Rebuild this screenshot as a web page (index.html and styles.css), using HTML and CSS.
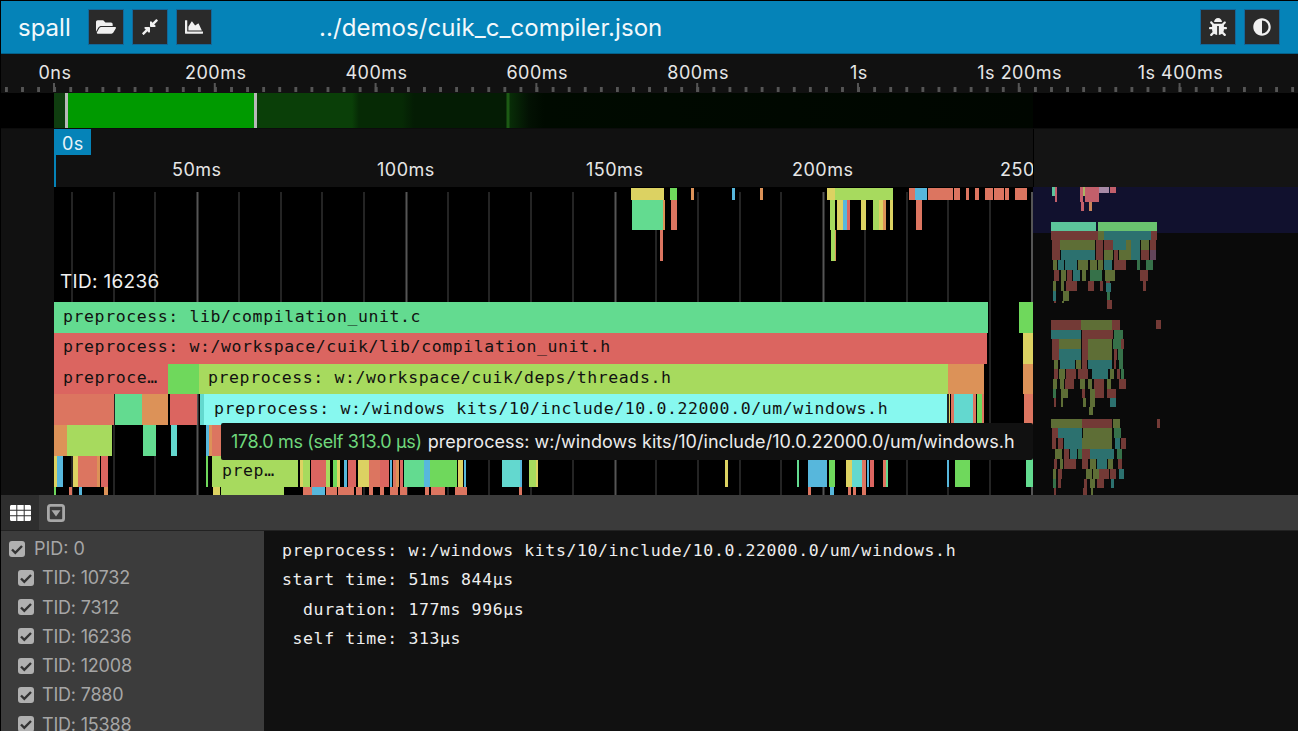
FILE: index.html
```html
<!DOCTYPE html>
<html>
<head>
    <title>spall</title>
    <link rel="stylesheet" href="styles.css">
</head>
<body>
    <div class="header">
        <span class="logo">spall</span>
        <button class="iconBtn"><svg viewBox="0 0 576 512"><path d="M572.694 292.093L500.27 416.248A63.997 63.997 0 0 1 444.989 448H45.025c-18.523 0-30.064-20.093-20.731-36.093l72.424-124.155A64 64 0 0 1 152 256h399.964c18.523 0 30.064 20.093 20.73 36.093zM152 224h328v-48c0-26.51-21.49-48-48-48H272l-64-64H48C21.49 64 0 85.49 0 112v278.046l69.077-118.418C86.214 242.25 117.989 224 152 224z"/></svg></button>
        <button class="iconBtn"><svg viewBox="0 0 448 512"><path d="M4.686 427.314L104 328l-32.922-31.029C55.958 281.851 66.666 256 88.048 256h112C213.303 256 224 266.745 224 280v112c0 21.382-25.803 32.09-40.922 16.971L152 376l-99.314 99.314c-6.248 6.248-16.379 6.248-22.627 0L4.686 449.941c-6.248-6.248-6.248-16.379 0-22.627zM443.314 84.686L344 184l32.922 31.029c15.12 15.12 4.412 40.971-16.97 40.971h-112C234.697 256 224 245.255 224 232V120c0-21.382 25.803-32.09 40.922-16.971L296 136l99.314-99.314c6.248-6.248 16.379-6.248 22.627 0l25.373 25.373c6.248 6.248 6.248 16.379 0 22.627z"/></svg></button>
        <button class="iconBtn"><svg viewBox="0 0 512 512"><path d="M500 384c6.6 0 12 5.4 12 12v40c0 6.6-5.4 12-12 12H12c-6.6 0-12-5.4-12-12V76c0-6.6 5.4-12 12-12h40c6.6 0 12 5.4 12 12v308h436zM372.7 159.5L288 216l-85.3-113.7c-5.1-6.8-15.5-6.3-19.9 1L96 248v104h384l-89.9-187.8c-3.2-6.5-11.4-8.7-17.4-4.7z"/></svg></button>
        <span class="fileName">../demos/cuik_c_compiler.json</span>
        <button class="iconBtn pushRight"><svg viewBox="0 0 512 512"><path d="M511.988 288.9c-.478 17.43-15.217 31.1-32.653 31.1H424v16c0 21.864-4.882 42.584-13.6 61.145l60.228 60.228c12.496 12.497 12.496 32.758 0 45.255-12.498 12.497-32.759 12.496-45.256 0l-54.736-54.736C345.886 467.965 314.351 480 280 480V236c0-6.627-5.373-12-12-12h-24c-6.627 0-12 5.373-12 12v244c-34.351 0-65.886-12.035-90.636-32.108l-54.736 54.736c-12.498 12.497-32.759 12.496-45.256 0-12.496-12.497-12.496-32.758 0-45.255l60.228-60.228C92.882 378.584 88 357.864 88 336v-16H32.666C15.23 320 .491 306.33.013 288.9-.484 270.816 14.028 256 32 256h56v-58.745l-46.628-46.628c-12.496-12.497-12.496-32.758 0-45.255 12.498-12.497 32.758-12.497 45.256 0L141.255 160h229.489l54.627-54.627c12.498-12.497 32.758-12.497 45.256 0 12.496 12.497 12.496 32.758 0 45.255L424 197.255V256h56c17.972 0 32.484 14.816 31.988 32.9zM257 0c-61.856 0-112 50.144-112 112h224C369 50.144 318.856 0 257 0z"/></svg></button>
        <button class="iconBtn"><svg viewBox="0 0 512 512"><path d="M8 256c0 136.966 111.033 248 248 248s248-111.034 248-248S392.966 8 256 8 8 119.033 8 256zm248 184V72c101.705 0 184 82.311 184 184 0 101.705-82.311 184-184 184z"/></svg></button>
    </div>

    <div class="overview">
        <div class="overviewLabels">
            <span class="ovLabel">0ns</span>
            <span class="ovLabel">200ms</span>
            <span class="ovLabel">400ms</span>
            <span class="ovLabel">600ms</span>
            <span class="ovLabel">800ms</span>
            <span class="ovLabel">1s</span>
            <span class="ovLabel">1s 200ms</span>
            <span class="ovLabel">1s 400ms</span>
        </div>
        <div class="overviewTicks"></div>
    </div>

    <div class="minimapBar">
        <div class="heat">
            <span class="handle handleLeft"></span>
            <span class="handle handleRight"></span>
        </div>
    </div>

    <div class="ruler">
        <div class="rulerMain">
            <span class="cursorFlag">0s</span>
            <span class="rulerLabel rl50">50ms</span>
            <span class="rulerLabel rl100">100ms</span>
            <span class="rulerLabel rl150">150ms</span>
            <span class="rulerLabel rl200">200ms</span>
            <span class="rulerLabel rl250">250</span>
        </div>
        <div class="rulerSide"></div>
    </div>

    <div class="flameArea">
        <svg class="flameSvg" width="1298" height="308" viewBox="0 187 1298 308">
            <rect class="gutter" x="0" y="187" width="54" height="308"/>
            <rect class="sideBg" x="1033" y="187" width="265" height="308"/>
            <rect class="sideView" x="1033" y="187" width="265" height="46"/>
            <path class="gridMinor" d="M72 192V495M114 192V495M155 192V495M239 192V495M281 192V495M322 192V495M364 192V495M448 192V495M489 192V495M531 192V495M573 192V495M656 192V495M698 192V495M740 192V495M781 192V495M865 192V495M907 192V495M948 192V495M990 192V495"/>
            <path class="gridMajor" d="M197.5 192V495M406.5 192V495M615.5 192V495M823.5 192V495M1032 192V495"/>

            <!-- upper thread -->
            <g>
                <rect class="ye" x="631" y="188" width="33" height="12"/><rect class="br" x="670" y="188" width="7" height="12"/><rect class="or" x="691" y="188" width="3" height="12"/><rect class="bl" x="732" y="188" width="3" height="12"/><rect class="or" x="760" y="188" width="3" height="12"/><rect class="ye" x="827" y="188" width="8" height="12"/><rect class="li" x="835" y="188" width="58" height="12"/><rect class="sa" x="909" y="188" width="6" height="12"/><rect class="bl" x="915" y="188" width="12" height="12"/><rect class="sa" x="928" y="188" width="25" height="12"/><rect class="sa" x="954" y="188" width="6" height="12"/><rect class="sa" x="966" y="188" width="3" height="12"/><rect class="sa" x="975" y="188" width="4" height="12"/><rect class="sa" x="985" y="188" width="8" height="12"/><rect class="sa" x="994" y="188" width="10" height="12"/><rect class="sa" x="1005" y="188" width="4" height="12"/><rect class="sa" x="1015" y="188" width="12" height="12"/>
                <rect class="gr" x="632" y="200" width="31" height="30"/><rect class="or" x="663" y="200" width="2" height="30"/><rect class="sa" x="671" y="200" width="6" height="30"/><rect class="li" x="830" y="200" width="5" height="30"/><rect class="ye" x="837" y="200" width="6" height="30"/><rect class="bl" x="843" y="200" width="4" height="30"/><rect class="re" x="847" y="200" width="3" height="30"/><rect class="ye" x="861" y="200" width="5" height="30"/><rect class="li" x="873" y="200" width="6" height="30"/><rect class="ye" x="879" y="200" width="4" height="30"/><rect class="or" x="883" y="200" width="3" height="30"/><rect class="ye" x="890" y="200" width="3" height="30"/><rect class="sa" x="916" y="200" width="6" height="30"/>
                <rect class="sa" x="660" y="230" width="3" height="31"/><rect class="li" x="831" y="230" width="4" height="31"/><rect class="or" x="835" y="230" width="1" height="31"/>
            </g>

            <text class="threadLabel" x="60" y="288">TID: 16236</text>

            <!-- thread 16236 -->
            <g>
                <rect class="gr" x="54" y="302" width="934" height="31"/><rect class="br" x="1019" y="302" width="14" height="31"/>
                <rect class="re" x="54" y="333" width="933" height="31"/><rect class="ye" x="1023" y="333" width="10" height="31"/>
                <rect class="re" x="54" y="364" width="114" height="30"/><rect class="br" x="168" y="364" width="31" height="30"/><rect class="li" x="199" y="364" width="749" height="30"/><rect class="or" x="948" y="364" width="36" height="30"/><rect class="or" x="1023" y="364" width="10" height="30"/>
                <rect class="sa" x="54" y="394" width="60" height="31"/><rect class="gr" x="115" y="394" width="27" height="31"/><rect class="or" x="142" y="394" width="26" height="31"/><rect class="re" x="170" y="394" width="27" height="31"/><rect class="te" x="200" y="394" width="4" height="31"/><rect class="cy" x="204" y="394" width="743" height="31"/><rect class="ye" x="949" y="394" width="1" height="31"/><rect class="sa" x="951" y="394" width="3" height="31"/><rect class="te" x="954" y="394" width="19" height="31"/><rect class="sa" x="973" y="394" width="3" height="31"/><rect class="br" x="977" y="394" width="5" height="31"/><rect class="sa" x="982" y="394" width="2" height="31"/><rect class="sa" x="1024" y="394" width="9" height="31"/>
                <rect class="or" x="54" y="425" width="13" height="31"/><rect class="li" x="67" y="425" width="45" height="31"/><rect class="gr" x="143" y="425" width="13" height="31"/><rect class="te" x="171" y="425" width="6" height="31"/><rect class="bl" x="206" y="425" width="3" height="31"/><rect class="or" x="209" y="425" width="3" height="31"/><rect class="sa" x="212" y="425" width="10" height="31"/>
            </g>
            <g>
                <rect class="ye" x="54" y="456" width="3" height="31"/><rect class="bl" x="57" y="456" width="6" height="31"/><rect class="ye" x="73" y="456" width="5" height="31"/><rect class="sa" x="78" y="456" width="19" height="31"/><rect class="or" x="97" y="456" width="3" height="31"/><rect class="re" x="101" y="456" width="7" height="31"/><rect class="br" x="206" y="456" width="2" height="31"/><rect class="li" x="212" y="456" width="86" height="31"/>
                <rect class="ye" x="300" y="456" width="3" height="31"/><rect class="li" x="303" y="456" width="7" height="31"/><rect class="re" x="311" y="456" width="15" height="31"/><rect class="li" x="326" y="456" width="4" height="31"/><rect class="br" x="333" y="456" width="4" height="31"/><rect class="ye" x="337" y="456" width="3" height="31"/><rect class="bl" x="344" y="456" width="3" height="31"/><rect class="re" x="348" y="456" width="8" height="31"/><rect class="ye" x="358" y="456" width="11" height="31"/><rect class="sa" x="369" y="456" width="11" height="31"/><rect class="re" x="380" y="456" width="9" height="31"/><rect class="bl" x="390" y="456" width="2" height="31"/><rect class="sa" x="393" y="456" width="3" height="31"/><rect class="or" x="396" y="456" width="3" height="31"/><rect class="re" x="400" y="456" width="3" height="31"/><rect class="gr" x="404" y="456" width="20" height="31"/><rect class="bl" x="424" y="456" width="6" height="31"/><rect class="br" x="430" y="456" width="27" height="31"/><rect class="ye" x="458" y="456" width="5" height="31"/><rect class="bl" x="464" y="456" width="2" height="31"/>
                <rect class="te" x="502" y="456" width="18" height="31"/><rect class="bl" x="520" y="456" width="2" height="31"/><rect class="li" x="529" y="456" width="7" height="31"/><rect class="ye" x="536" y="456" width="2" height="31"/><rect class="ye" x="725" y="456" width="3" height="31"/><rect class="gr" x="797" y="456" width="2" height="31"/><rect class="bl" x="808" y="456" width="19" height="31"/><rect class="br" x="829" y="456" width="6" height="31"/><rect class="ye" x="846" y="456" width="6" height="31"/><rect class="te" x="852" y="456" width="10" height="31"/><rect class="sa" x="862" y="456" width="4" height="31"/><rect class="bl" x="867" y="456" width="2" height="31"/><rect class="re" x="870" y="456" width="4" height="31"/><rect class="sa" x="883" y="456" width="3" height="31"/><rect class="gr" x="886" y="456" width="2" height="31"/><rect class="bl" x="947" y="456" width="2" height="31"/><rect class="br" x="955" y="456" width="15" height="31"/><rect class="gr" x="1026" y="456" width="7" height="31"/>
                <rect class="br" x="54" y="487" width="2" height="8"/><rect class="sa" x="69" y="487" width="3" height="8"/><rect class="bl" x="79" y="487" width="3" height="8"/><rect class="or" x="104" y="487" width="4" height="8"/><rect class="ye" x="213" y="487" width="7" height="8"/><rect class="li" x="221" y="487" width="63" height="8"/><rect class="sa" x="303" y="487" width="9" height="8"/><rect class="bl" x="312" y="487" width="13" height="8"/><rect class="sa" x="326" y="487" width="11" height="8"/><rect class="sa" x="338" y="487" width="16" height="8"/><rect class="sa" x="356" y="487" width="6" height="8"/><rect class="sa" x="369" y="487" width="4" height="8"/><rect class="sa" x="380" y="487" width="4" height="8"/><rect class="sa" x="390" y="487" width="8" height="8"/><rect class="sa" x="400" y="487" width="7" height="8"/><rect class="sa" x="425" y="487" width="4" height="8"/><rect class="sa" x="431" y="487" width="14" height="8"/><rect class="sa" x="455" y="487" width="12" height="8"/><rect class="sa" x="519" y="487" width="3" height="8"/><rect class="sa" x="808" y="487" width="3" height="8"/><rect class="bl" x="830" y="487" width="4" height="8"/><rect class="sa" x="848" y="487" width="3" height="8"/><rect class="sa" x="853" y="487" width="3" height="8"/><rect class="sa" x="862" y="487" width="4" height="8"/>
            </g>

            <text class="barText" x="63" y="322">preprocess: lib/compilation_unit.c</text>
            <text class="barText" x="63" y="352">preprocess: w:/workspace/cuik/lib/compilation_unit.h</text>
            <text class="barText" x="63" y="383">preproce…</text>
            <text class="barText" x="208" y="383">preprocess: w:/workspace/cuik/deps/threads.h</text>
            <text class="barText" x="214" y="414">preprocess: w:/windows kits/10/include/10.0.22000.0/um/windows.h</text>
            <text class="barText" x="222" y="476">prep…</text>

            <!-- scaled copy of the threads beside the main view -->
            <g class="mapTop">
                <rect class="mg" x="1052" y="187" width="4" height="9"/><rect class="mr" x="1055" y="187" width="2" height="15"/><rect class="mr" x="1080" y="187" width="3" height="15"/><rect class="my" x="1083" y="187" width="6" height="9"/><rect class="mr" x="1085" y="187" width="14" height="15"/><rect class="mp" x="1099" y="187" width="10" height="6"/><rect class="mr" x="1110" y="187" width="6" height="6"/><rect class="mr" x="1081" y="202" width="3" height="9"/><rect class="mo" x="1089" y="202" width="3" height="9"/>
            </g>
            <rect class="mapBarA" x="1051" y="222" width="45" height="9"/><rect class="mapBarB" x="1098" y="222" width="59" height="9"/>
            <g class="mapDim">
                <rect class="dr" x="1051" y="231" width="47" height="9"/><rect class="do" x="1098" y="231" width="6" height="9"/><rect class="dt" x="1104" y="231" width="47" height="9"/><rect class="dr" x="1151" y="231" width="6" height="9"/>
                <rect class="dr" x="1052" y="240" width="8" height="10"/><rect class="do" x="1060" y="240" width="35" height="10"/><rect class="dr" x="1096" y="240" width="7" height="10"/><rect class="dr" x="1104" y="240" width="9" height="10"/><rect class="dt" x="1113" y="240" width="13" height="10"/><rect class="do" x="1126" y="240" width="5" height="10"/><rect class="dt" x="1131" y="240" width="9" height="10"/><rect class="do" x="1141" y="240" width="8" height="10"/><rect class="dr" x="1150" y="240" width="6" height="10"/>
                <rect class="dr" x="1052" y="250" width="8" height="10"/><rect class="dt" x="1061" y="250" width="34" height="10"/><rect class="dr" x="1096" y="250" width="7" height="10"/><rect class="do" x="1104" y="250" width="9" height="10"/><rect class="dr" x="1114" y="250" width="4" height="10"/><rect class="do" x="1119" y="250" width="12" height="10"/><rect class="dt" x="1131" y="250" width="9" height="10"/><rect class="dr" x="1141" y="250" width="8" height="10"/><rect class="dp" x="1150" y="250" width="6" height="10"/>
                <rect class="do" x="1053" y="260" width="4" height="10"/><rect class="dt" x="1058" y="260" width="6" height="10"/><rect class="dt" x="1065" y="260" width="12" height="10"/><rect class="do" x="1078" y="260" width="10" height="10"/><rect class="do" x="1090" y="260" width="7" height="10"/><rect class="do" x="1098" y="260" width="5" height="10"/><rect class="dt" x="1104" y="260" width="8" height="10"/><rect class="dr" x="1114" y="260" width="12" height="10"/><rect class="dg" x="1137" y="260" width="3" height="10"/><rect class="dg" x="1146" y="260" width="7" height="10"/>
                <rect class="dr" x="1054" y="270" width="5" height="11"/><rect class="do" x="1061" y="270" width="5" height="11"/><rect class="dr" x="1067" y="270" width="5" height="11"/><rect class="dt" x="1073" y="270" width="7" height="11"/><rect class="do" x="1082" y="270" width="4" height="11"/><rect class="dg" x="1090" y="270" width="12" height="11"/><rect class="do" x="1105" y="270" width="10" height="11"/><rect class="dr" x="1140" y="270" width="8" height="11"/>
                <rect class="do" x="1053" y="281" width="3" height="10"/><rect class="do" x="1061" y="281" width="3" height="10"/><rect class="dr" x="1066" y="281" width="11" height="10"/><rect class="dr" x="1088" y="281" width="6" height="10"/><rect class="dr" x="1100" y="281" width="3" height="10"/><rect class="dr" x="1106" y="281" width="4" height="10"/><rect class="dr" x="1143" y="281" width="3" height="10"/>
                <rect class="dt" x="1053" y="291" width="3" height="10"/><rect class="do" x="1063" y="291" width="6" height="10"/><rect class="dt" x="1106" y="283" width="5" height="9"/><rect class="dg" x="1107" y="292" width="3" height="8"/>
                <rect class="dr" x="1107" y="300" width="5" height="9"/><rect class="dr" x="1054" y="301" width="2" height="2"/><rect class="do" x="1062" y="301" width="2" height="2"/>

                <rect class="dr" x="1051" y="320" width="30" height="10"/><rect class="do" x="1081" y="320" width="31" height="10"/><rect class="dr" x="1112" y="320" width="8" height="10"/><rect class="dr" x="1156" y="320" width="5" height="9"/>
                <rect class="dt" x="1051" y="330" width="30" height="9"/><rect class="dr" x="1082" y="330" width="31" height="9"/><rect class="dg" x="1114" y="330" width="9" height="9"/>
                <rect class="dr" x="1052" y="339" width="7" height="10"/><rect class="do" x="1059" y="339" width="22" height="10"/><rect class="dr" x="1082" y="339" width="6" height="10"/><rect class="do" x="1088" y="339" width="24" height="10"/><rect class="dg" x="1113" y="339" width="8" height="10"/><rect class="dr" x="1121" y="339" width="3" height="10"/>
                <rect class="dr" x="1052" y="349" width="7" height="11"/><rect class="dt" x="1059" y="349" width="22" height="11"/><rect class="dr" x="1082" y="349" width="6" height="11"/><rect class="do" x="1088" y="349" width="24" height="11"/><rect class="dr" x="1114" y="349" width="3" height="11"/><rect class="dg" x="1118" y="349" width="5" height="11"/>
                <rect class="do" x="1054" y="360" width="4" height="9"/><rect class="dt" x="1060" y="360" width="15" height="9"/><rect class="do" x="1076" y="360" width="5" height="9"/><rect class="dr" x="1082" y="360" width="5" height="9"/><rect class="dt" x="1088" y="360" width="24" height="9"/><rect class="dr" x="1114" y="360" width="2" height="9"/><rect class="dg" x="1119" y="360" width="4" height="9"/>
                <rect class="dr" x="1054" y="369" width="4" height="10"/><rect class="do" x="1059" y="369" width="6" height="10"/><rect class="dr" x="1066" y="369" width="10" height="10"/><rect class="dr" x="1078" y="369" width="10" height="10"/><rect class="dt" x="1092" y="369" width="16" height="10"/><rect class="do" x="1110" y="369" width="4" height="10"/><rect class="dr" x="1117" y="369" width="3" height="10"/><rect class="dg" x="1121" y="369" width="3" height="10"/>
                <rect class="do" x="1053" y="379" width="4" height="10"/><rect class="do" x="1060" y="379" width="4" height="10"/><rect class="dr" x="1065" y="379" width="9" height="10"/><rect class="do" x="1080" y="379" width="5" height="10"/><rect class="do" x="1088" y="379" width="4" height="10"/><rect class="dr" x="1094" y="379" width="10" height="10"/><rect class="do" x="1107" y="379" width="4" height="10"/><rect class="dr" x="1119" y="379" width="7" height="10"/>
                <rect class="dg" x="1053" y="389" width="3" height="9"/><rect class="do" x="1061" y="389" width="7" height="9"/><rect class="dr" x="1082" y="389" width="3" height="9"/><rect class="do" x="1090" y="389" width="5" height="9"/><rect class="dr" x="1095" y="389" width="9" height="9"/><rect class="dr" x="1107" y="389" width="9" height="9"/>
                <rect class="dr" x="1054" y="398" width="2" height="9"/><rect class="do" x="1061" y="398" width="2" height="9"/><rect class="do" x="1083" y="398" width="3" height="9"/><rect class="do" x="1090" y="398" width="5" height="9"/><rect class="dt" x="1110" y="398" width="6" height="9"/>
                <rect class="do" x="1089" y="407" width="4" height="8"/>

                <rect class="do" x="1051" y="419" width="31" height="9"/><rect class="dr" x="1082" y="419" width="30" height="9"/><rect class="do" x="1113" y="419" width="7" height="9"/><rect class="dr" x="1157" y="419" width="3" height="9"/>
                <rect class="dr" x="1052" y="428" width="6" height="10"/><rect class="dt" x="1058" y="428" width="24" height="10"/><rect class="do" x="1083" y="428" width="29" height="10"/><rect class="dg" x="1114" y="428" width="7" height="10"/>
                <rect class="dr" x="1052" y="438" width="4" height="11"/><rect class="dr" x="1058" y="438" width="5" height="11"/><rect class="dt" x="1064" y="438" width="18" height="11"/><rect class="do" x="1082" y="438" width="8" height="11"/><rect class="do" x="1090" y="438" width="22" height="11"/><rect class="dt" x="1115" y="438" width="5" height="11"/><rect class="dr" x="1121" y="438" width="5" height="11"/>
                <rect class="do" x="1055" y="449" width="7" height="10"/><rect class="dr" x="1064" y="449" width="5" height="10"/><rect class="dt" x="1070" y="449" width="7" height="10"/><rect class="dg" x="1078" y="449" width="4" height="10"/><rect class="dr" x="1082" y="449" width="8" height="10"/><rect class="dt" x="1090" y="449" width="24" height="10"/><rect class="dg" x="1117" y="449" width="5" height="10"/>
                <rect class="dr" x="1054" y="459" width="3" height="10"/><rect class="do" x="1060" y="459" width="3" height="10"/><rect class="dr" x="1064" y="459" width="12" height="10"/><rect class="dr" x="1082" y="459" width="6" height="10"/><rect class="do" x="1090" y="459" width="6" height="10"/><rect class="dt" x="1097" y="459" width="10" height="10"/><rect class="do" x="1108" y="459" width="5" height="10"/><rect class="dr" x="1118" y="459" width="4" height="10"/>
                <rect class="do" x="1053" y="469" width="3" height="10"/><rect class="dr" x="1058" y="469" width="4" height="10"/><rect class="do" x="1086" y="469" width="6" height="10"/><rect class="do" x="1093" y="469" width="6" height="10"/><rect class="dr" x="1099" y="469" width="10" height="10"/><rect class="dr" x="1110" y="469" width="6" height="10"/><rect class="dt" x="1119" y="469" width="5" height="10"/>
                <rect class="dg" x="1053" y="479" width="3" height="9"/><rect class="dr" x="1058" y="479" width="3" height="9"/><rect class="dr" x="1084" y="479" width="3" height="9"/><rect class="do" x="1090" y="479" width="5" height="9"/><rect class="dr" x="1097" y="479" width="7" height="9"/><rect class="dt" x="1111" y="479" width="3" height="9"/>
                <rect class="dr" x="1054" y="488" width="2" height="7"/><rect class="dr" x="1083" y="488" width="4" height="7"/><rect class="do" x="1091" y="488" width="2" height="7"/>
            </g>
        </svg>
        <div class="tooltip"><span class="tipTime">178.0 ms (self 313.0 µs)</span><span class="tipName">preprocess: w:/windows kits/10/include/10.0.22000.0/um/windows.h</span></div>
    </div>

    <div class="tabBar">
        <div class="tab tabActive"><svg class="gridIcon" viewBox="0 0 21 16"><path d="M0 1.500C0 .7.7 0 1.500 0H6.300V4.700H0zM7.300 0h6.400V4.700H7.300zM14.700 0H19.500C20.300 0 21 .7 21 1.500V4.700H14.700zM0 5.700H6.300V10.300H0zM7.300 5.700h6.400V10.300H7.300zM14.700 5.700H21V10.300H14.700zM0 11.300H6.300V16H1.500C.7 16 0 15.300 0 14.500zM7.300 11.300h6.400V16H7.300zM14.700 11.300H21V14.500C21 15.300 20.300 16 19.500 16H14.700z"/></svg></div>
        <div class="tab"><svg class="caretIcon" viewBox="0 0 18 18"><path fill-rule="evenodd" d="M3.500 0h11A3.500 3.500 0 0 1 18 3.500v11a3.500 3.500 0 0 1-3.500 3.500h-11A3.500 3.500 0 0 1 0 14.500v-11A3.500 3.500 0 0 1 3.500 0zM3.500 2.800a.7.7 0 0 0-.7.7v11c0 .4.300.7.7.7h11a.7.7 0 0 0 .7-.7v-11a.7.7 0 0 0-.7-.7zM4.500 6.200h9L9 12.500z"/></svg></div>
    </div>

    <div class="bottom">
        <div class="threadList">
            <div class="threadRow pidRow"><span class="check"><svg viewBox="0 0 16 16"><path d="M3 8.500l3.300 3.300L13 5"/></svg></span>PID: 0</div>
            <div class="threadRow"><span class="check"><svg viewBox="0 0 16 16"><path d="M3 8.500l3.300 3.300L13 5"/></svg></span>TID: 10732</div>
            <div class="threadRow"><span class="check"><svg viewBox="0 0 16 16"><path d="M3 8.500l3.300 3.300L13 5"/></svg></span>TID: 7312</div>
            <div class="threadRow"><span class="check"><svg viewBox="0 0 16 16"><path d="M3 8.500l3.300 3.300L13 5"/></svg></span>TID: 16236</div>
            <div class="threadRow"><span class="check"><svg viewBox="0 0 16 16"><path d="M3 8.500l3.300 3.300L13 5"/></svg></span>TID: 12008</div>
            <div class="threadRow"><span class="check"><svg viewBox="0 0 16 16"><path d="M3 8.500l3.300 3.300L13 5"/></svg></span>TID: 7880</div>
            <div class="threadRow"><span class="check"><svg viewBox="0 0 16 16"><path d="M3 8.500l3.300 3.300L13 5"/></svg></span>TID: 15388</div>
        </div>
        <pre class="details">preprocess: w:/windows kits/10/include/10.0.22000.0/um/windows.h
start time: 51ms 844µs
  duration: 177ms 996µs
 self time: 313µs</pre>
    </div>
</body>
</html>
```

FILE: styles.css
```css
* {
    box-sizing: border-box;
}

html, body {
    height: 100%;
}

body {
    margin: 0;
    height: 731px;
    overflow: hidden;
    background-color: #111111;
    color: #f0f0f0;
    font-family: Inter, "Open Sans", sans-serif;
    border: 1px solid #000000;
    border-bottom: none;
    border-right: none;
}

.header {
    height: 53px;
    background-color: #0583b8;
    border-bottom: 1px solid #04618a;
    display: flex;
    align-items: center;
    gap: 8px;
    padding-left: 17px;
    padding-right: 18px;
}

.logo {
    font-size: 24px;
    width: 62px;
    color: #f2f8fb;
}

.fileName {
    font-size: 24px;
    letter-spacing: 0.07px;
    margin-left: 99px;
    color: #f2f8fb;
}

.iconBtn {
    width: 36px;
    height: 36px;
    background-color: #2a2a2a;
    border: 1px solid #13679a;
    padding: 0;
    display: flex;
    align-items: center;
    justify-content: center;
}

.iconBtn svg {
    width: 20px;
    height: 18px;
    fill: #f0f0f0;
}

.pushRight {
    margin-left: auto;
}

.overview {
    height: 39px;
    background-color: #111111;
    position: relative;
    overflow: hidden;
}

.overviewLabels {
    display: flex;
    padding-top: 8px;
    margin-left: -26.5px;
}

.ovLabel {
    width: 160.8px;
    flex: none;
    text-align: center;
    font-size: 18px;
    letter-spacing: 0.5px;
    line-height: 22px;
    color: #e6e6e6;
}

.overviewTicks {
    position: absolute;
    left: 0;
    right: 0;
    bottom: 1px;
    height: 9px;
    background-image:
        linear-gradient(to right, #555555 2px, transparent 2px),
        linear-gradient(to right, #555555 3px, transparent 3px);
    background-size: 160.8px 9px, 16.08px 5px;
    background-position: 52px 0, 4px 4px;
    background-repeat: repeat-x;
}

.minimapBar {
    height: 36px;
    background-color: #000000;
    padding-left: 53px;
    border-bottom: 1px solid #0c0c0c;
}

.heat {
    position: relative;
    width: 979px;
    height: 35px;
    background: linear-gradient(to right, #0f3d0f 0, #0f3d0f 12px, #009a00 12px, #009a00 200px, #0a3f08 201px, #0a3f08 298px, #062a05 305px, #062a05 348px, #041c04 360px, #041c04 452px, #1c5a14 453px, #1c5a14 455px, #082d07 456px, #031103 475px, #000a00 490px, #000600 979px);
}

.handle {
    position: absolute;
    top: 0;
    width: 3px;
    height: 35px;
    background-color: #b8b8b8;
}

.handleLeft {
    left: 11px;
}

.handleRight {
    left: 200px;
}

.ruler {
    height: 58px;
    display: flex;
    background-color: #111111;
}

.rulerMain {
    position: relative;
    width: 1032px;
    flex: none;
    overflow: hidden;
}

.rulerSide {
    flex: 1;
    background-color: #141414;
    border-left: 1px solid #000000;
}

.cursorFlag {
    position: absolute;
    left: 53px;
    top: 0;
    width: 37px;
    height: 26px;
    background-color: #0583b8;
    font-size: 18px;
    letter-spacing: 0.5px;
    line-height: 30px;
    padding-left: 8px;
    color: #e8f4f9;
}

.cursorFlag::after {
    content: "";
    position: absolute;
    left: 0;
    top: 26px;
    width: 2px;
    height: 32px;
    background-color: #0583b8;
}

.rulerLabel {
    position: absolute;
    top: 30px;
    font-size: 18px;
    letter-spacing: 0.5px;
    line-height: 22px;
    color: #e6e6e6;
}

.rl50 {
    left: 171px;
}

.rl100 {
    left: 376px;
}

.rl150 {
    left: 585px;
}

.rl200 {
    left: 791px;
}

.rl250 {
    left: 999px;
}

.flameArea {
    position: relative;
    height: 308px;
    background-color: #000000;
    overflow: hidden;
}

.flameSvg {
    display: block;
    margin-left: -1px;
}

.gutter {
    fill: #111111;
}

.sideBg {
    fill: #0a0a0a;
}

.sideView {
    fill: #11112e;
}

.gridMinor {
    stroke: #242424;
    stroke-width: 2;
    fill: none;
}

.gridMajor {
    stroke: #555555;
    stroke-width: 2;
    fill: none;
}

.gr { fill: #63db90; }
.re { fill: #db6560; }
.sa { fill: #dc7560; }
.li { fill: #a7da5e; }
.br { fill: #6fd85c; }
.cy { fill: #87f8ef; }
.te { fill: #63d8cf; }
.bl { fill: #57b7dc; }
.ye { fill: #dcd262; }
.or { fill: #dc9258; }

.mapBarA { fill: #5cc49b; }
.mapBarB { fill: #6ac36f; }

.mg { fill: #5cc49b; }
.mr { fill: #c25f6b; }
.my { fill: #a9b565; }
.mp { fill: #a78aa6; }
.mo { fill: #c9855a; }

.mapDim {
    opacity: 0.92;
}

.dr { fill: #7c3f3a; }
.do { fill: #66773a; }
.dt { fill: #2f7a78; }
.dg { fill: #3a7a4f; }
.dp { fill: #6a4a60; }

.threadLabel {
    font-family: Inter, sans-serif;
    font-size: 19px;
    letter-spacing: 0.3px;
    fill: #f0f0f0;
}

.barText {
    font-family: "DejaVu Sans Mono", monospace;
    font-size: 16.5px;
    letter-spacing: 0.6px;
    fill: #111111;
}

.tooltip {
    position: absolute;
    left: 220px;
    top: 236px;
    height: 37px;
    width: 812px;
    background-color: #111111;
    border-radius: 2px;
    padding-left: 10px;
    display: flex;
    align-items: center;
    gap: 6px;
    font-size: 18px;
    white-space: nowrap;
}

.tipTime {
    color: #6fd87c;
    letter-spacing: -0.35px;
}

.tipName {
    color: #ececec;
    letter-spacing: 0.05px;
}

.tabBar {
    height: 36px;
    background-color: #3b3b3b;
    border-bottom: 1px solid #222222;
    display: flex;
}

.tab {
    width: 38px;
    display: flex;
    align-items: center;
    justify-content: center;
}

.tabActive {
    background-color: #2e2e2e;
}

.gridIcon {
    width: 21px;
    height: 16px;
    fill: #ffffff;
}

.caretIcon {
    width: 18px;
    height: 18px;
    fill: #a8a8a8;
    margin-left: -5px;
}

.bottom {
    display: flex;
    height: 200px;
}

.threadList {
    width: 263px;
    flex: none;
    height: 200px;
    overflow: hidden;
    background-color: #3c3c3c;
    padding-top: 3px;
    color: #a6a6a6;
    font-size: 18px;
}

.threadRow {
    height: 29.25px;
    padding-left: 17px;
    display: flex;
    align-items: center;
    gap: 8px;
    letter-spacing: -0.2px;
}

.pidRow {
    padding-left: 8px;
    gap: 9px;
    letter-spacing: 0;
}

.check {
    width: 16px;
    height: 16px;
    background-color: #b0b0b0;
    border-radius: 3px;
    flex: none;
    display: flex;
}

.check svg {
    width: 16px;
    height: 16px;
    fill: none;
    stroke: #333333;
    stroke-width: 2.4;
}

.details {
    margin: 0;
    padding: 5px 0 0 18px;
    flex: 1;
    background-color: #111111;
    color: #eeeeee;
    font-family: "DejaVu Sans Mono", monospace;
    font-size: 16.5px;
    letter-spacing: 0.6px;
    line-height: 29.4px;
}
```
